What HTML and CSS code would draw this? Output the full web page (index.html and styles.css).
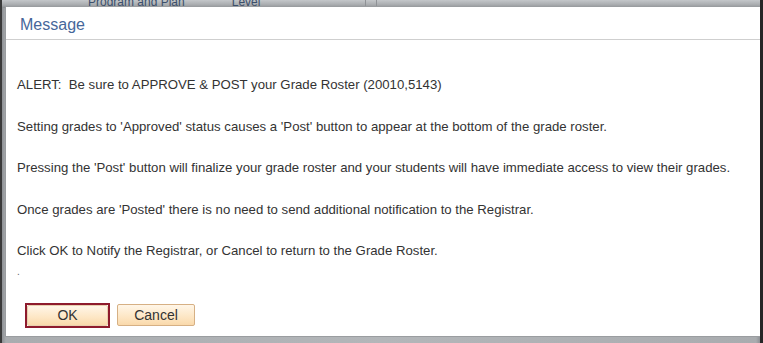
FILE: index.html
```html
<!DOCTYPE html>
<html>
<head>
<meta charset="utf-8">
<link rel="stylesheet" href="styles.css">
</head>
<body>
<div class="screen">
  <div class="backdrop">
    <span class="col col-plan">Program and Plan</span>
    <span class="col col-level">Level</span>
    <span class="sep sep-a"></span>
    <span class="sep sep-b"></span>
  </div>
  <div class="dialog">
    <div class="dialog-header">
      <h1 class="dialog-title">Message</h1>
    </div>
    <div class="dialog-body">
      <p class="msg">ALERT:&nbsp; Be sure to APPROVE &amp; POST your Grade Roster (20010,5143)</p>
      <p class="msg">Setting grades to 'Approved' status causes a 'Post' button to appear at the bottom of the grade roster.</p>
      <p class="msg">Pressing the 'Post' button will finalize your grade roster and your students will have immediate access to view their grades.</p>
      <p class="msg">Once grades are 'Posted' there is no need to send additional notification to the Registrar.</p>
      <p class="msg last">Click OK to Notify the Registrar, or Cancel to return to the Grade Roster.</p>
      <p class="msg dot">.</p>
    </div>
    <div class="dialog-actions">
      <span class="focus-ring"><button class="btn btn-ok">OK</button></span>
      <button class="btn btn-cancel">Cancel</button>
    </div>
  </div>
</div>
</body>
</html>
```

FILE: styles.css
```css
html, body {
  margin: 0;
  padding: 0;
  background: #2e2e2e;
}

.screen {
  position: relative;
  box-sizing: border-box;
  width: 763px;
  height: 343px;
  overflow: hidden;
  border-left: 2px solid #3a3a3a;
  border-right: 3px solid #262626;
  background: linear-gradient(to right, #8e9195 0px, #a9acaf 4px, #b3b6b9 50%, #a9acaf calc(100% - 4px), #8e9195 100%);
  font-family: "Liberation Sans", Arial, sans-serif;
}

.backdrop {
  display: flex;
  align-items: flex-start;
  height: 8px;
  overflow: hidden;
  background: linear-gradient(to bottom, #c4c7ca 0px, #a7aaad 5px, #8a8d90 8px);
}

.col {
  font-size: 12px;
  line-height: 12px;
  color: #3b4f6b;
  margin-top: -4px;
  white-space: nowrap;
}

.col-plan {
  margin-left: 86px;
}

.col-level {
  margin-left: 47px;
}

.sep {
  width: 1px;
  height: 8px;
  background: #8f9296;
}

.sep-a {
  margin-left: 105px;
}

.sep-b {
  margin-left: 10px;
}

.dialog {
  position: absolute;
  left: 4px;
  top: 7px;
  width: 754px;
  height: 329px;
  background: #ffffff;
  box-shadow: 0 0 0 1px #9a9da0;
  display: flex;
  flex-direction: column;
}

.dialog-header {
  height: 32px;
  border-bottom: 1px solid #cfcfcf;
  padding-left: 14px;
}

.dialog-title {
  margin: 0;
  font-weight: normal;
  font-size: 16px;
  line-height: 18px;
  padding-top: 9px;
  color: #46679a;
}

.dialog-body {
  padding: 35px 0 0 11px;
}

.msg {
  margin: 0 0 20.75px 0;
  font-size: 13.2px;
  line-height: 20.75px;
  color: #333333;
}

.msg.last {
  margin-bottom: 0;
}

.msg.dot {
  margin-bottom: 0;
  font-size: 10px;
  color: #666666;
}

.dialog-actions {
  display: flex;
  align-items: center;
  gap: 7px;
  padding: 20px 0 0 19px;
}

.focus-ring {
  display: inline-flex;
  border: 2px solid #8e1b2d;
  padding: 0;
}

.btn {
  font-family: "Liberation Sans", Arial, sans-serif;
  font-size: 14px;
  line-height: 17px;
  color: #333333;
  background: linear-gradient(to bottom, #fff6e8 0%, #fde6c4 60%, #f9d9ab 100%);
  border: 1px solid #d6b084;
  border-radius: 2px;
  margin: 0;
  cursor: pointer;
}

.btn-ok {
  width: 81px;
  height: 21px;
  padding: 0;
  border-color: #e8cfae;
}

.btn-cancel {
  width: 78px;
  height: 22px;
  padding: 0;
}
```
